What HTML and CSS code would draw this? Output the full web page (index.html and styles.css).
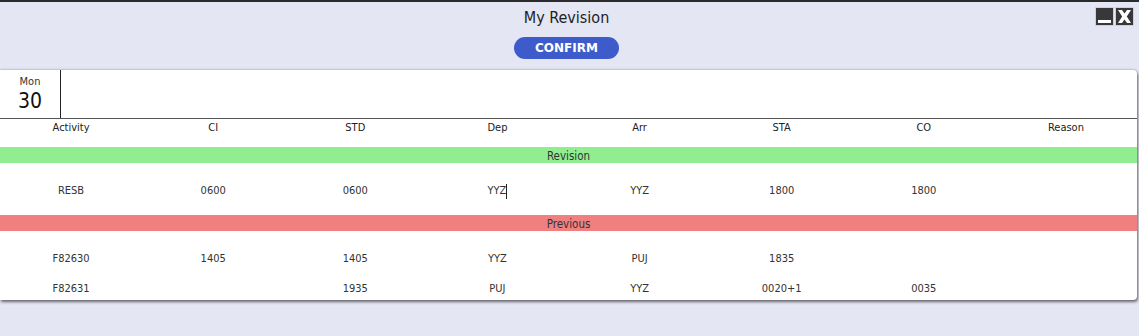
FILE: index.html
```html
<!DOCTYPE html>
<html lang="en">
<head>
    <meta charset="UTF-8">
    <title>My Revision</title>
    <link rel="stylesheet" href="styles.css">
</head>
<body>

    <!-- Window -->
    <div class="window">

        <!-- Window controls -->
        <div class="win-controls">
            <span class="win-btn win-min"><span class="min-bar"></span></span>
            <span class="win-btn win-close">
                <svg width="15" height="15" viewBox="0 0 15 15">
                    <path d="M1 1 L5 1 L7.5 4.5 L10 1 L14 1 L9.8 7.5 L14 14 L10 14 L7.5 10.5 L5 14 L1 14 L5.2 7.5 Z" fill="#fff"/>
                </svg>
            </span>
        </div>

        <!-- Title -->
        <div class="titlebar">
            <h1>My Revision</h1>
            <button class="confirm">CONFIRM</button>
        </div>

        <!-- Revision card -->
        <div class="card">
            <div class="day-row">
                <div class="day-box">
                    <div class="day-name">Mon</div>
                    <div class="day-num">30</div>
                </div>
            </div>

            <div class="grid head-row">
                <span>Activity</span>
                <span>CI</span>
                <span>STD</span>
                <span>Dep</span>
                <span>Arr</span>
                <span>STA</span>
                <span>CO</span>
                <span>Reason</span>
            </div>

            <div class="band band-green">Revision</div>
            <div class="section section-rev">
                <div class="grid data-row">
                    <span>RESB</span>
                    <span>0600</span>
                    <span>0600</span>
                    <span>YYZ<i class="caret"></i></span>
                    <span>YYZ</span>
                    <span>1800</span>
                    <span>1800</span>
                    <span></span>
                </div>
            </div>

            <div class="band band-red">Previous</div>
            <div class="section section-prev">
                <div class="grid data-row">
                    <span>F82630</span>
                    <span>1405</span>
                    <span>1405</span>
                    <span>YYZ</span>
                    <span>PUJ</span>
                    <span>1835</span>
                    <span></span>
                    <span></span>
                </div>
                <div class="grid data-row">
                    <span>F82631</span>
                    <span></span>
                    <span>1935</span>
                    <span>PUJ</span>
                    <span>YYZ</span>
                    <span>0020+1</span>
                    <span>0035</span>
                    <span></span>
                </div>
            </div>
        </div>
    </div>

</body>
</html>
```

FILE: styles.css
```css
/* General Styles */
body {
    font-family: "DejaVu Sans", sans-serif;
    font-stretch: condensed;
    background-color: #e4e6f4;
    color: #222;
    margin: 0;
    padding: 0;
}

/* Window */
.window {
    position: relative;
    height: 336px;
    border-top: 2px solid #2b2b2b;
    box-sizing: border-box;
}

.win-controls {
    position: absolute;
    top: 5px;
    right: 5px;
    display: flex;
    gap: 1px;
}

.win-btn {
    width: 19px;
    height: 19px;
    background-color: #383838;
    border: 1px solid #d0d0d0;
    box-sizing: border-box;
    display: flex;
    align-items: center;
    justify-content: center;
    position: relative;
}

.min-bar {
    position: absolute;
    left: 2px;
    right: 2px;
    bottom: 2px;
    height: 3px;
    background-color: #fff;
}

/* Title */
.titlebar {
    display: flex;
    flex-direction: column;
    align-items: center;
    padding-top: 6px;
    padding-right: 6px;
}

h1 {
    margin: 0;
    font-size: 16px;
    font-weight: normal;
    line-height: 20px;
    color: #1e1e1e;
}

.confirm {
    margin-top: 9px;
    width: 105px;
    height: 22px;
    border: none;
    border-radius: 11px;
    background-color: #3e5bcc;
    color: #fff;
    font-family: "DejaVu Sans", sans-serif;
    font-size: 12px;
    font-weight: bold;
    padding: 0;
}

/* Card */
.card {
    margin-top: 11px;
    margin-right: 2px;
    background-color: #fff;
    border-radius: 0 4px 4px 0;
    box-shadow: 1px 2px 3px rgba(0, 0, 0, 0.55), 0 -1px 2px rgba(0, 0, 0, 0.15);
    height: 230px;
    overflow: hidden;
}

.day-row {
    height: 48px;
    border-bottom: 1px solid #555;
}

.day-box {
    width: 60px;
    height: 48px;
    border-right: 1px solid #222;
    text-align: center;
}

.day-name {
    font-size: 11px;
    line-height: 13px;
    padding-top: 5px;
    color: #333;
}

.day-num {
    font-size: 21px;
    line-height: 27px;
    color: #111;
}

/* Table grid */
.grid {
    display: grid;
    grid-template-columns: repeat(8, 1fr);
    text-align: center;
    font-size: 11px;
}

.head-row {
    height: 28px;
    line-height: 14px;
    padding-top: 2px;
    box-sizing: border-box;
    color: #222;
}

.band {
    height: 16px;
    line-height: 18px;
    text-align: center;
    font-size: 11.5px;
    color: #333;
}

.band-green {
    background-color: #90ee90;
}

.band-red {
    background-color: #f08080;
}

.section-rev {
    padding: 12px 0 10px;
}

.section-prev {
    padding-top: 12px;
}

.data-row {
    height: 30px;
    line-height: 31px;
    color: #333;
}

.caret {
    display: inline-block;
    width: 1px;
    height: 15px;
    background-color: #222;
    vertical-align: middle;
}
```
